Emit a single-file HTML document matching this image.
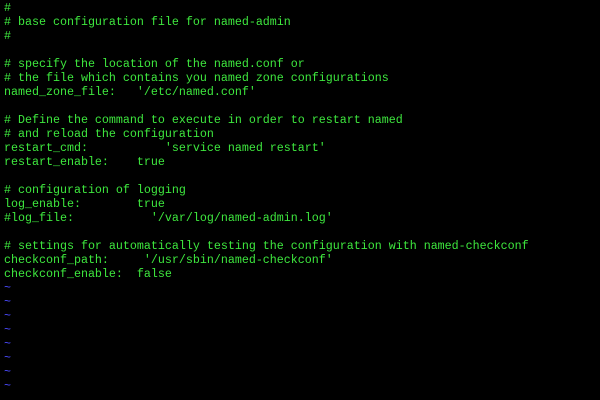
<!DOCTYPE html>
<html><head><style>
html,body{margin:0;background:#000;width:600px;height:400px;overflow:hidden}
pre{margin:0;position:absolute;left:4px;top:1px;font-family:"Liberation Mono",monospace;font-size:11.67px;line-height:14px;color:#3ee83e}
.t{color:#4a4aff}
</style></head><body><pre>#
# base configuration file for named-admin
#

# specify the location of the named.conf or
# the file which contains you named zone configurations
named_zone_file:   '/etc/named.conf'

# Define the command to execute in order to restart named
# and reload the configuration
restart_cmd:           'service named restart'
restart_enable:    true

# configuration of logging
log_enable:        true
#log_file:           '/var/log/named-admin.log'

# settings for automatically testing the configuration with named-checkconf
checkconf_path:     '/usr/sbin/named-checkconf'
checkconf_enable:  false
<span class="t">~
~
~
~
~
~
~
~</span></pre></body></html>
